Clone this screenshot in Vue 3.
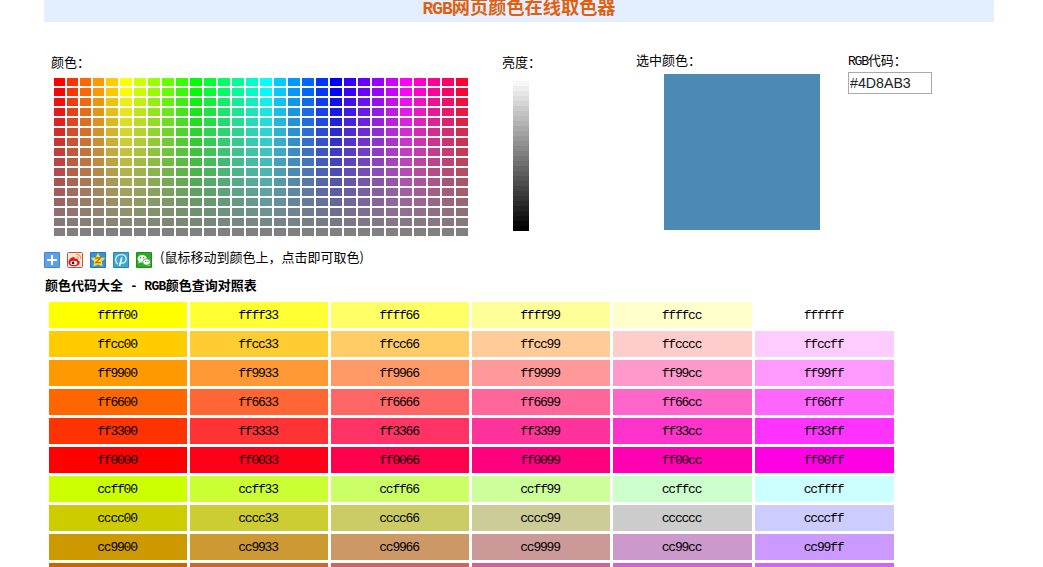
<script setup>
import { ref } from 'vue'

const selected = ref('#4D8AB3')
const levels = ['ff', 'cc', '99', '66', '33', '00']

// red, yellow, green, cyan, blue, magenta
const base = [[1, 0, 0], [1, 1, 0], [0, 1, 0], [0, 1, 1], [0, 0, 1], [1, 0, 1]]

const hueColor = (row, col) => {
  const from = base[Math.floor(col / 5)]
  const to = base[(Math.floor(col / 5) + 1) % 6]
  const n = col % 5
  const fade = row === 1 ? 0.5 : row
  const rgb = from.map((c, i) => {
    const v = (c * (5 - n) + to[i] * n) * 51
    return Math.round((v * (15 - fade) + 128 * fade) / 15)
  })
  return `rgb(${rgb.join(',')})`
}

const palette = []
for (let row = 0; row < 16; row++) {
  for (let col = 0; col < 30; col++) {
    palette.push(hueColor(row, col))
  }
}

const grays = []
for (let i = 1; i <= 30; i++) {
  const v = Math.round(255 * (1 - i / 30))
  grays.push(`rgb(${v},${v},${v})`)
}

const redRow = { '00': '00', 33: '19', 66: '4c', 99: '7f', cc: 'b2', ff: 'e5' }
const codes = []
for (const r of ['ff', 'cc']) {
  for (const g of levels) {
    if (r === 'cc' && (g === '33' || g === '00')) continue
    for (const b of [...levels].reverse()) {
      const shown = r === 'ff' && g === '00' ? redRow[b] : b
      codes.push({ code: r + g + b, bg: '#' + r + g + shown })
    }
  }
}
</script>

<template>
  <div class="page">
    <h1 class="title"><span class="name">RGB</span>网页颜色在线取色器</h1>

    <div class="picker">
      <div class="hue">
        <div class="label">颜色：</div>
        <div class="palette">
          <i v-for="(c, i) in palette" :key="i" :style="{ background: c }" @click="selected = c"></i>
        </div>
      </div>
      <div class="light">
        <div class="label">亮度：</div>
        <div class="grays">
          <i v-for="c in grays" :key="c" :style="{ background: c }" @click="selected = c"></i>
        </div>
      </div>
      <div class="chosen">
        <div class="label">选中颜色：</div>
        <div class="swatch" :style="{ background: selected }"></div>
      </div>
      <div class="rgb">
        <div class="label"><span class="latin">RGB</span>代码：</div>
        <input v-model="selected" type="text">
      </div>
    </div>

    <div class="share">
      <svg viewBox="0 0 16 16">
        <rect width="16" height="16" rx="1" fill="#3f86d8" />
        <rect x="1" y="1" width="14" height="14" fill="#5ba0e8" />
        <path d="M8 3v10M3 8h10" stroke="#fff" stroke-width="2" />
      </svg>
      <svg viewBox="0 0 16 16">
        <rect x=".5" y=".5" width="15" height="15" rx="1" fill="#fbe9dc" stroke="#d94b3c" />
        <path d="M6.5 5C4.2 5.1 1.4 8 1.4 10.5c0 2.3 2.5 3.8 5.5 3.8 3.2 0 5.8-1.6 5.8-3.8 0-1.3-1-2-2-2.2.5-1.4-.8-2.2-2.8-1.4C8 5.7 7.6 5 6.5 5z" fill="#dc1c1c" />
        <ellipse cx="6.8" cy="10.9" rx="3.4" ry="2.1" fill="#fff" />
        <circle cx="6.1" cy="11" r="1.4" fill="#222" />
        <path d="M9 2.5c3-.6 5.2 1.7 4.5 4.7M9.2 4.8c1.5-.3 2.5.8 2.1 2.1" fill="none" stroke="#f0a24a" stroke-width="1.2" />
      </svg>
      <svg viewBox="0 0 16 16">
        <rect width="16" height="16" rx="1" fill="#1f78c4" />
        <rect x="1" y="1" width="14" height="14" fill="#3392dc" />
        <path d="M8 .8l2.3 4.4 5 .8-3.5 3.6.8 5L8 12.5l-4.6 2.1.8-5L.7 6l5-.8z" fill="#ffd83a" />
        <path d="M5 6h5.6L5.8 10.6h5" fill="none" stroke="#b07a10" stroke-width="1.3" />
      </svg>
      <svg viewBox="0 0 16 16">
        <rect width="16" height="16" rx="1" fill="#2287b8" />
        <rect x="1" y="1" width="14" height="14" fill="#3fa3d0" />
        <path d="M5 12.2C.9 9.5 2.4 2.6 8.3 2.6c6.2.1 6.7 8.3.5 8.5-1.1 0-1.6-.5-1.6-.5" fill="none" stroke="#d5effa" stroke-width="1.4" />
        <path d="M8.8 5.5L6.5 14" stroke="#fff" stroke-width="1.6" />
      </svg>
      <svg viewBox="0 0 16 16">
        <rect width="16" height="16" rx="1" fill="#169414" />
        <rect x="1" y="1" width="14" height="14" fill="#2eaa26" />
        <path d="M2.8 9.5L2.4 11.6l2.2-1.2z" fill="#fff" />
        <ellipse cx="6.2" cy="6.7" rx="4.6" ry="3.8" fill="#fff" />
        <path d="M13 12l.8 2-2.3-1.1z" fill="#fff" />
        <ellipse cx="10.6" cy="10" rx="3.9" ry="3.2" fill="#fff" stroke="#2eaa26" stroke-width=".8" />
        <g fill="#2b9422">
          <circle cx="4.6" cy="5.7" r=".7" />
          <circle cx="7.7" cy="5.7" r=".7" />
          <circle cx="9.4" cy="9.3" r=".6" />
          <circle cx="12" cy="9.3" r=".6" />
        </g>
      </svg>
      <span class="tip">(鼠标移动到颜色上，点击即可取色)</span>
    </div>

    <h2 class="subtitle">颜色代码大全<span class="latin"> - RGB</span>颜色查询对照表</h2>

    <div class="codes">
      <div v-for="c in codes" :key="c.code" class="latin" :style="{ background: c.bg }">{{ c.code }}</div>
    </div>
  </div>
</template>

<style>
body {
  background: #fff;
  overflow: hidden;
}
</style>

<style scoped>
.page {
  box-sizing: border-box;
  width: 1043px;
  height: 567px;
  padding-left: 44px;
  overflow: hidden;
  font: 13px/16px "Noto Sans CJK SC", sans-serif;
  color: #000;
}

.latin {
  font-family: "Liberation Mono", monospace;
  letter-spacing: -1.2px;
}

.title {
  width: 950px;
  height: 22px;
  margin: 0;
  background: #e3efff;
  color: #e0600f;
  font: bold 18.2px/12px "Noto Sans CJK SC", sans-serif;
  text-align: center;
}

.title .name {
  font-family: "Liberation Mono", monospace;
  font-size: 18px;
  letter-spacing: -1px;
}

.picker {
  display: flex;
  height: 229px;
}

.label {
  height: 16px;
  white-space: nowrap;
}

.hue {
  width: 458px;
  padding: 32px 0 0 7px;
  box-sizing: border-box;
}

.palette {
  display: grid;
  grid-template-columns: repeat(4, 11px) repeat(26, 12px);
  grid-auto-rows: 8px;
  gap: 2px;
  margin: 8px 0 0 3px;
}

.light {
  width: 134px;
  padding-top: 32px;
}

.grays {
  width: 16px;
  margin: 11px 0 0 11px;
}

.grays i {
  display: block;
  height: 5px;
}

.chosen {
  width: 212px;
  padding-top: 30px;
}

.swatch {
  width: 156px;
  height: 156px;
  margin: 6px 0 0 28px;
}

.rgb {
  padding-top: 30px;
}

.rgb input {
  display: block;
  box-sizing: border-box;
  width: 84px;
  height: 22px;
  margin-top: 4px;
  padding: 1px;
  border: 1px solid #a9a9a9;
  font: 14.2px "Liberation Sans", sans-serif;
  color: #222;
}

.share {
  display: flex;
  gap: 7px;
  height: 25px;
}

.share svg {
  width: 16px;
  height: 16px;
  margin-top: 1px;
}

.tip {
  margin: -2px 0 0 1px;
  white-space: nowrap;
}

.subtitle {
  height: 26px;
  margin: 0 0 0 1px;
  font-size: 13px;
  font-weight: bold;
  line-height: 18px;
  white-space: pre;
}

.subtitle .latin {
  letter-spacing: -0.7px;
}

.codes {
  display: grid;
  grid-template-columns: repeat(4, 138px) repeat(2, 139px);
  grid-auto-rows: 26px;
  gap: 3px;
  margin-left: 5px;
}

.codes div {
  padding-right: 2px;
  line-height: 28px;
  text-align: center;
}
</style>
